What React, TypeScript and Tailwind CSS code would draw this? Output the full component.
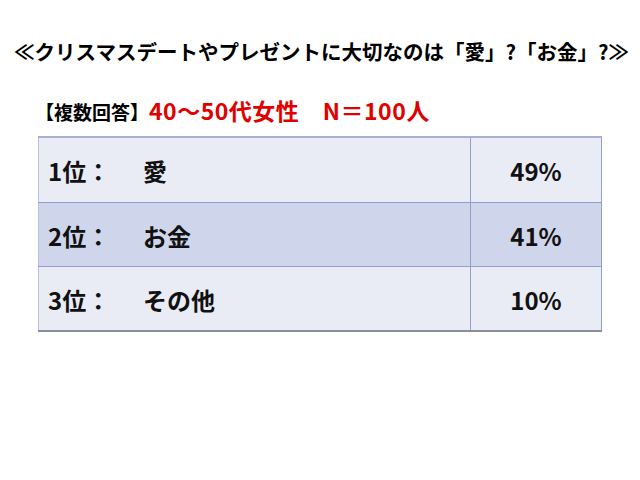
export default function App() {
  const rows = [
    { rank: "1位：", label: "愛", pct: "49%", bg: "bg-[#e9ebf5]" },
    { rank: "2位：", label: "お金", pct: "41%", bg: "bg-[#cfd5ea]" },
    { rank: "3位：", label: "その他", pct: "10%", bg: "bg-[#e9ebf5]" },
  ];
  return (
    <div
      className="w-[640px] h-[480px] bg-white relative overflow-hidden"
      style={{ fontFamily: '"Noto Sans CJK JP", "Noto Sans", sans-serif' }}
    >
      <div className="pt-[38px] pl-[14px] text-[20.5px] font-bold leading-[26px] text-black whitespace-nowrap">
        ≪クリスマスデートやプレゼントに大切なのは「愛」?「お金」?≫
      </div>
      <div className="mt-[32px] pl-[35px] flex items-baseline whitespace-nowrap font-bold leading-[28px]">
        <span className="text-[19px] text-black">【複数回答】</span>
        <span className="text-[23px] text-[#e00000] tracking-[0.5px]">40～50代女性　N＝100人</span>
      </div>
      <div className="ml-[38px] mt-[10px] w-[564px] border-t-2 border-t-[#a7b0cf] border-b-2 border-b-[#8a8f9c]">
        {rows.map((r, i) => (
          <div
            key={i}
            className={`flex h-[64px] ${r.bg} ${i > 0 ? "border-t border-t-[#8fa0cc]" : ""}`}
          >
            <div className="w-[433px] border-l border-l-[#b8c2e0] border-r border-r-[#8fa0cc] flex items-center pl-[9px] pt-[2px] text-[24px] font-bold text-[#111]">
              <span className="w-[95px]">{r.rank}</span>
              <span>{r.label}</span>
            </div>
            <div className="flex-1 border-r border-r-[#8fa0cc] flex items-center justify-center pt-[2px] text-[24px] font-bold text-[#111]">
              {r.pct}
            </div>
          </div>
        ))}
      </div>
    </div>
  );
}
